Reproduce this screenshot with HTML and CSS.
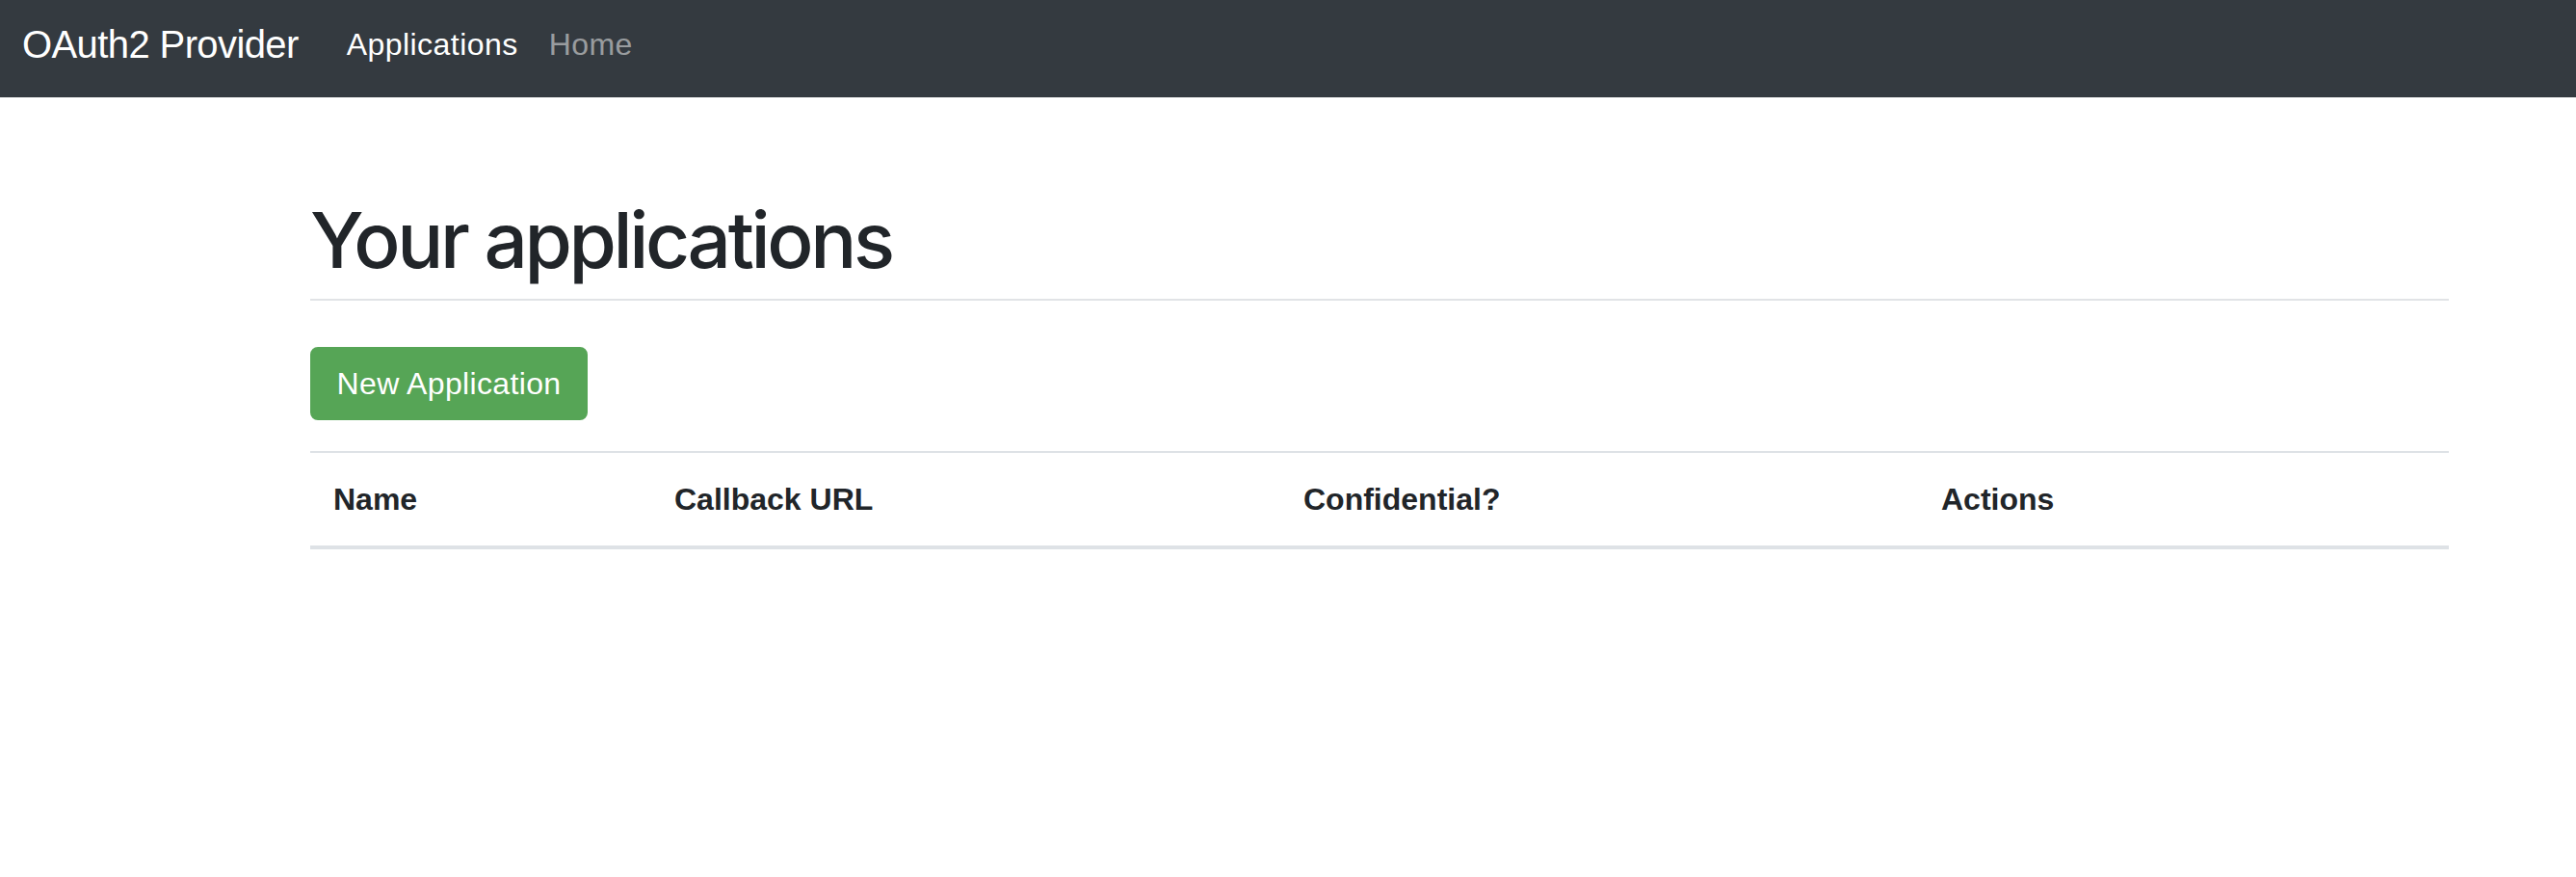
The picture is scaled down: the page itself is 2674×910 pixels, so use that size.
FILE: index.html
```html
<!DOCTYPE html>
<html lang="en">
<head>
<meta charset="utf-8">
<title>OAuth2 Provider</title>
<link rel="stylesheet" href="styles.css">
</head>
<body>
<nav class="navbar">
  <a class="brand" href="#">OAuth2 Provider</a>
  <ul class="nav">
    <li><a class="nav-link active" href="#">Applications</a></li>
    <li><a class="nav-link" href="#">Home</a></li>
  </ul>
</nav>
<main class="container">
  <h1 class="page-header">Your applications</h1>
  <a class="btn-success" href="#">New Application</a>
  <table class="table">
    <colgroup>
      <col class="col-name">
      <col class="col-url">
      <col class="col-conf">
      <col class="col-actions">
    </colgroup>
    <thead>
      <tr>
        <th>Name</th>
        <th>Callback URL</th>
        <th>Confidential?</th>
        <th>Actions</th>
      </tr>
    </thead>
    <tbody></tbody>
  </table>
</main>
</body>
</html>
```
FILE: styles.css
```css
* { box-sizing: border-box; }

html, body {
  margin: 0;
  padding: 0;
  background: #ffffff;
}

body {
  font-family: "Liberation Sans", Arial, sans-serif;
  color: #212529;
  font-size: 32px;
  line-height: 48px;
}

.navbar {
  height: 101px;
  background: #343a40;
  display: flex;
  align-items: center;
  padding: 0 0 9px 23px;
}

.brand {
  font-size: 40px;
  line-height: 60px;
  color: #ffffff;
  text-decoration: none;
  letter-spacing: -0.6px;
  margin-right: 34px;
}

.nav {
  display: flex;
  list-style: none;
  margin: 0;
  padding: 0;
}

.nav-link {
  display: block;
  padding: 0 16px;
  font-size: 32px;
  line-height: 48px;
  letter-spacing: 0.45px;
  color: rgba(255, 255, 255, 0.5);
  text-decoration: none;
}

.nav-link.active {
  color: #ffffff;
}

.container {
  margin: 0 132px 0 322px;
}

.page-header {
  margin: 100px 0 0 0;
  padding-bottom: 13px;
  border-bottom: 2px solid #e1e3e6;
  font-family: Inter, "Liberation Sans", sans-serif;
  font-size: 80px;
  line-height: 96px;
  font-weight: 500;
  letter-spacing: -3.4px;
  color: #212529;
}

.btn-success {
  display: block;
  width: 288px;
  margin-top: 48px;
  padding: 12px 0;
  text-align: center;
  background: #56a556;
  border: 2px solid #56a556;
  border-radius: 8px;
  color: #ffffff;
  font-size: 32px;
  line-height: 48px;
  letter-spacing: 0.35px;
  text-decoration: none;
}

.table {
  width: 100%;
  margin-top: 32px;
  border-collapse: collapse;
  table-layout: fixed;
}

.col-name { width: 354px; }
.col-url { width: 653px; }
.col-conf { width: 662px; }
.col-actions { width: auto; }

.table th {
  text-align: left;
  font-weight: bold;
  padding: 24px;
  font-size: 32px;
  line-height: 48px;
  color: #212529;
  border-top: 2px solid #dee2e6;
  border-bottom: 4px solid #dee2e6;
}
```
